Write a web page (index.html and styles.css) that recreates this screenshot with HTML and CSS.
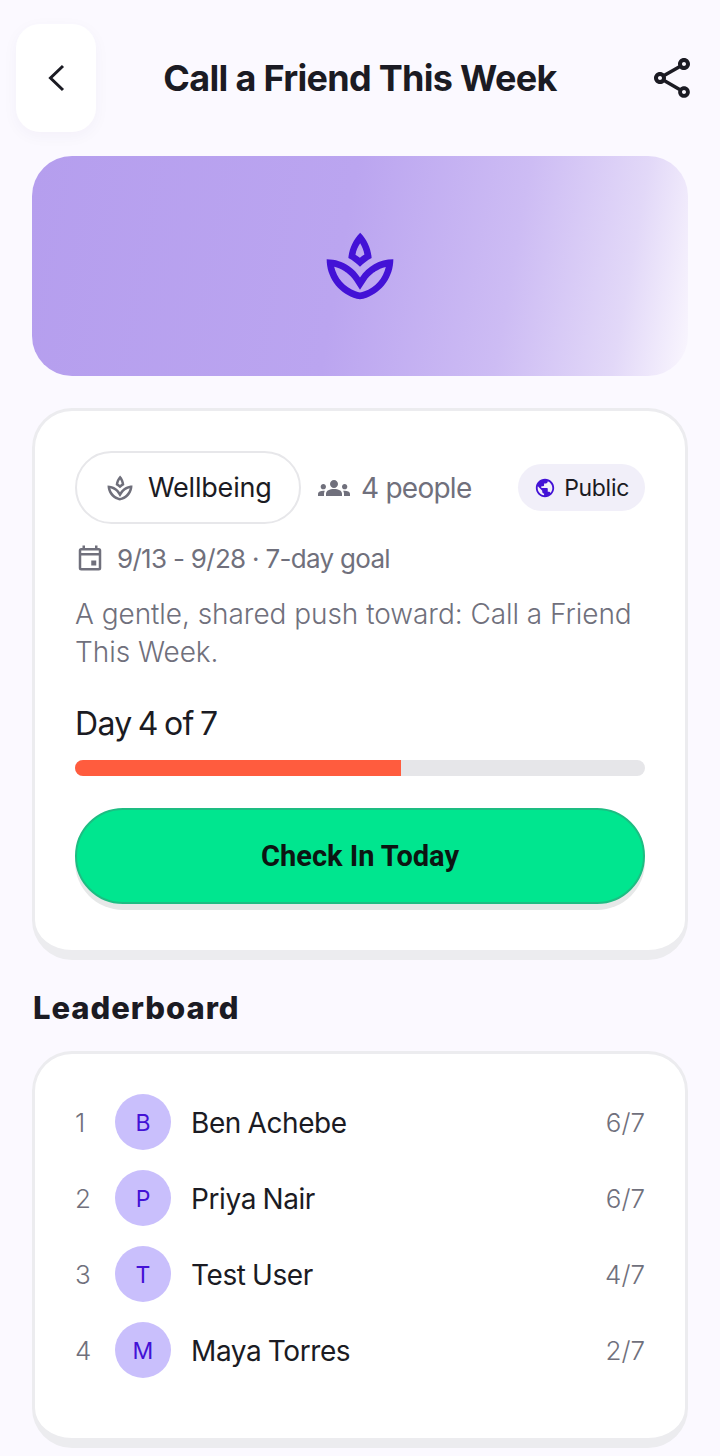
FILE: index.html
```html
<!DOCTYPE html>
<html lang="en">
<head>
    <meta charset="UTF-8">
    <meta name="viewport" content="width=device-width, initial-scale=1.0">
    <title>Call a Friend This Week</title>
    <link rel="stylesheet" href="styles.css">
</head>
<body>
    <header class="top-bar">
        <button class="back-button" aria-label="Back">
            <svg class="back-icon" viewBox="0 0 18 28"><path d="M16 2 3.5 14 16 26"/></svg>
        </button>
        <h1 class="page-title">Call a Friend This Week</h1>
        <svg class="share-icon" viewBox="0 0 24 24"><path d="M18 16.08c-.76 0-1.44.3-1.96.77L8.91 12.7c.05-.23.09-.46.09-.7s-.04-.47-.09-.7l7.05-4.11c.54.5 1.25.81 2.04.81 1.66 0 3-1.34 3-3s-1.34-3-3-3-3 1.34-3 3c0 .24.04.47.09.7L8.04 9.81C7.5 9.31 6.79 9 6 9c-1.66 0-3 1.34-3 3s1.34 3 3 3c.79 0 1.5-.31 2.04-.81l7.12 4.16c-.05.21-.08.43-.08.65 0 1.61 1.31 2.92 2.92 2.92s2.92-1.31 2.92-2.92-1.31-2.92-2.92-2.92zM18 4c.55 0 1 .45 1 1s-.45 1-1 1-1-.45-1-1 .45-1 1-1zM6 13c-.55 0-1-.45-1-1s.45-1 1-1 1 .45 1 1-.45 1-1 1zm12 7.02c-.55 0-1-.45-1-1s.45-1 1-1 1 .45 1 1-.45 1-1 1z"/></svg>
    </header>

    <main class="content">
        <div class="hero">
            <svg class="hero-icon" viewBox="0 0 24 24"><path d="M15.49 9.63c-.18-2.79-1.31-5.51-3.43-7.63-2.14 2.14-3.32 4.86-3.55 7.63 1.28.68 2.46 1.56 3.49 2.63 1.03-1.06 2.21-1.94 3.49-2.63zm-3.44-4.44c.63 1.03 1.07 2.18 1.27 3.39-.47.3-.92.63-1.35.98-.42-.34-.87-.67-1.33-.97.22-1.21.67-2.36 1.41-3.4zM12 15.45c-.82-1.25-1.86-2.34-3.06-3.2-.13-.09-.27-.16-.4-.26.13.09.27.17.39.25C6.98 10.83 4.59 10 2 10c0 5.32 3.36 9.82 8.03 11.49.63.23 1.29.4 1.97.51.68-.12 1.33-.29 1.97-.51C18.64 19.82 22 15.32 22 10c-4.18 0-7.85 2.18-10 5.45zm1.32 4.15c-.44.15-.88.27-1.33.37-.44-.09-.87-.21-1.29-.36-3.29-1.18-5.7-3.99-6.45-7.35 1.1.26 2.15.71 3.12 1.33l-.02.01c.13.09.26.18.39.25l.07.03c.99.72 1.84 1.61 2.51 2.65L12 19.1l1.67-2.55c.69-1.05 1.55-1.95 2.53-2.66l.07-.03c.09-.05.18-.11.27-.17l-.01-.02c.98-.65 2.07-1.13 3.21-1.4-.75 3.37-3.15 6.18-6.42 7.33z"/></svg>
        </div>

        <section class="card goal-card">
            <div class="meta-row">
                <div class="category-chip">
                    <svg class="chip-icon" viewBox="0 0 24 24"><path d="M15.49 9.63c-.18-2.79-1.31-5.51-3.43-7.63-2.14 2.14-3.32 4.86-3.55 7.63 1.28.68 2.46 1.56 3.49 2.63 1.03-1.06 2.21-1.94 3.49-2.63zm-3.44-4.44c.63 1.03 1.07 2.18 1.27 3.39-.47.3-.92.63-1.35.98-.42-.34-.87-.67-1.33-.97.22-1.21.67-2.36 1.41-3.4zM12 15.45c-.82-1.25-1.86-2.34-3.06-3.2-.13-.09-.27-.16-.4-.26.13.09.27.17.39.25C6.98 10.83 4.59 10 2 10c0 5.32 3.36 9.82 8.03 11.49.63.23 1.29.4 1.97.51.68-.12 1.33-.29 1.97-.51C18.64 19.82 22 15.32 22 10c-4.18 0-7.85 2.18-10 5.45zm1.32 4.15c-.44.15-.88.27-1.33.37-.44-.09-.87-.21-1.29-.36-3.29-1.18-5.7-3.99-6.45-7.35 1.1.26 2.15.71 3.12 1.33l-.02.01c.13.09.26.18.39.25l.07.03c.99.72 1.84 1.61 2.51 2.65L12 19.1l1.67-2.55c.69-1.05 1.55-1.95 2.53-2.66l.07-.03c.09-.05.18-.11.27-.17l-.01-.02c.98-.65 2.07-1.13 3.21-1.4-.75 3.37-3.15 6.18-6.42 7.33z"/></svg>
                    <span>Wellbeing</span>
                </div>
                <div class="people-count">
                    <svg class="people-icon" viewBox="0 0 24 24"><path d="M4 13c1.1 0 2-.9 2-2s-.9-2-2-2-2 .9-2 2 .9 2 2 2zm1.13 1.1c-.37-.06-.74-.1-1.13-.1-.99 0-1.93.21-2.78.58C.48 14.9 0 15.62 0 16.43V18h4.5v-1.61c0-.83.23-1.61.63-2.29zM20 13c1.1 0 2-.9 2-2s-.9-2-2-2-2 .9-2 2 .9 2 2 2zm4 3.43c0-.81-.48-1.53-1.22-1.85-.85-.37-1.79-.58-2.78-.58-.39 0-.76.04-1.13.1.4.68.63 1.46.63 2.29V18H24v-1.57zm-7.76-2.78c-1.17-.52-2.61-.9-4.24-.9-1.63 0-3.07.39-4.24.9C6.68 14.13 6 15.21 6 16.39V18h12v-1.61c0-1.18-.68-2.26-1.76-2.74zM12 12c1.66 0 3-1.34 3-3s-1.34-3-3-3-3 1.34-3 3 1.34 3 3 3z"/></svg>
                    <span>4 people</span>
                </div>
                <div class="visibility-pill">
                    <svg class="public-icon" viewBox="0 0 24 24"><path d="M12 2C6.48 2 2 6.48 2 12s4.48 10 10 10 10-4.48 10-10S17.52 2 12 2zm-1 17.93c-3.95-.49-7-3.85-7-7.93 0-.62.08-1.21.21-1.79L9 15v1c0 1.1.9 2 2 2v1.93zm6.9-2.54c-.26-.81-1-1.39-1.9-1.39h-1v-3c0-.55-.45-1-1-1H8v-2h2c.55 0 1-.45 1-1V7h2c1.1 0 2-.9 2-2v-.41c2.93 1.19 5 4.06 5 7.41 0 2.08-.8 3.97-2.1 5.39z"/></svg>
                    <span>Public</span>
                </div>
            </div>

            <div class="date-row">
                <svg class="date-icon" viewBox="0 0 24 24"><path fill-rule="evenodd" d="M6 2h2v2h8V2h2v2h1a2 2 0 0 1 2 2v14a2 2 0 0 1-2 2H5a2 2 0 0 1-2-2V6a2 2 0 0 1 2-2h1V2zM5 6v2h14V6H5zm0 4v10h14V10H5zm8 4h4v4h-4v-4z"/></svg>
                <span>9/13 - 9/28 · 7-day goal</span>
            </div>

            <p class="description">A gentle, shared push toward: Call a Friend This Week.</p>

            <div class="day-label">Day 4 of 7</div>
            <div class="progress-track">
                <div class="progress-fill" style="width: 57.14%"></div>
            </div>

            <button class="check-in-button">Check In Today</button>
        </section>

        <h2 class="section-heading">Leaderboard</h2>

        <section class="card leaderboard-card">
            <ul class="leaderboard-list">
                <li class="leaderboard-row">
                    <span class="rank">1</span>
                    <span class="avatar">B</span>
                    <span class="name">Ben Achebe</span>
                    <span class="score">6/7</span>
                </li>
                <li class="leaderboard-row">
                    <span class="rank">2</span>
                    <span class="avatar">P</span>
                    <span class="name">Priya Nair</span>
                    <span class="score">6/7</span>
                </li>
                <li class="leaderboard-row">
                    <span class="rank">3</span>
                    <span class="avatar">T</span>
                    <span class="name">Test User</span>
                    <span class="score">4/7</span>
                </li>
                <li class="leaderboard-row">
                    <span class="rank">4</span>
                    <span class="avatar">M</span>
                    <span class="name">Maya Torres</span>
                    <span class="score">2/7</span>
                </li>
            </ul>
        </section>
    </main>
</body>
</html>
```

FILE: styles.css
```css
* {
    box-sizing: border-box;
}

body {
    margin: 0;
    height: 1456px;
    overflow: hidden;
    background: #FBF9FF;
    font-family: Inter, "Noto Sans", sans-serif;
    color: #1B1B23;
}

.top-bar {
    display: grid;
    grid-template-columns: 1fr auto 1fr;
    align-items: center;
    padding: 24px 16px 0;
}

.back-button {
    justify-self: start;
    display: flex;
    align-items: center;
    justify-content: center;
    width: 80px;
    height: 108px;
    padding: 0;
    background: #ffffff;
    border: none;
    border-radius: 24px;
    box-shadow: 0 4px 16px rgba(40, 20, 90, 0.04);
}

.back-icon {
    width: 18px;
    height: 28px;
    fill: none;
    stroke: #1B1B23;
    stroke-width: 3;
}

.page-title {
    margin: 0;
    font-size: 36px;
    font-weight: 700;
    letter-spacing: -0.7px;
    white-space: nowrap;
}

.share-icon {
    justify-self: end;
    width: 48px;
    height: 48px;
    margin-right: 8px;
    fill: #1B1B23;
}

.content {
    padding: 24px 32px 0;
}

.hero {
    display: flex;
    align-items: center;
    justify-content: center;
    height: 220px;
    border-radius: 40px;
    background: linear-gradient(100deg, #B59EEE 0%, #BBA5F0 47%, #CDBCF4 72%, #E2D8F8 89%, #FAF7FE 100%);
}

.hero-icon {
    width: 80px;
    height: 80px;
    fill: #4312D6;
}

.card {
    background: #ffffff;
    border: 3px solid #ECECEF;
    border-bottom-width: 10px;
    border-radius: 40px;
}

.goal-card {
    margin-top: 32px;
    height: 552px;
    padding: 40px 40px 0;
}

.meta-row {
    display: flex;
    align-items: center;
}

.category-chip {
    display: flex;
    align-items: center;
    gap: 13px;
    width: 226px;
    height: 73px;
    padding-left: 28px;
    border: 2px solid #E7E7EA;
    border-radius: 37px;
    font-size: 27px;
    letter-spacing: -0.2px;
}

.chip-icon {
    width: 30px;
    height: 30px;
    fill: #6F6F7B;
}

.people-count {
    display: flex;
    align-items: center;
    gap: 11px;
    margin-left: 17px;
    font-size: 28px;
    letter-spacing: -0.75px;
    color: #70707C;
}

.people-icon {
    width: 32px;
    height: 32px;
    fill: #70707C;
}

.visibility-pill {
    display: flex;
    align-items: center;
    gap: 8px;
    height: 47px;
    margin-left: auto;
    padding: 0 16px 0 16px;
    background: #F1EFF9;
    border-radius: 24px;
    font-size: 23px;
    letter-spacing: -0.3px;
}

.public-icon {
    width: 22px;
    height: 22px;
    fill: #4312D6;
}

.date-row {
    display: flex;
    align-items: center;
    gap: 12px;
    margin-top: 16px;
    height: 36px;
    font-size: 26px;
    letter-spacing: -0.7px;
    color: #70707C;
}

.date-icon {
    width: 30px;
    height: 30px;
    fill: #70707C;
}

.description {
    margin: 19px 0 0;
    font-size: 28px;
    line-height: 38px;
    font-weight: 300;
    letter-spacing: -0.05px;
    color: #70707C;
}

.day-label {
    margin-top: 33px;
    font-size: 32px;
    line-height: 40px;
    letter-spacing: -0.7px;
    word-spacing: -2px;
}

.progress-track {
    height: 16px;
    margin-top: 16px;
    background: #E6E6E9;
    border-radius: 8px;
    overflow: hidden;
}

.progress-fill {
    height: 100%;
    background: #FF5C3E;
}

.check-in-button {
    display: block;
    width: 100%;
    height: 96px;
    margin-top: 32px;
    background: #00E68F;
    border: 2px solid #1DBD82;
    border-radius: 48px;
    box-shadow: 0 6px 0 #E6E8E8;
    font-family: Roboto, sans-serif;
    font-size: 29px;
    font-weight: 700;
    color: #0C1512;
}

.section-heading {
    margin: 28px 0 0 1px;
    font-size: 31px;
    line-height: 40px;
    font-weight: 800;
    letter-spacing: 0.95px;
}

.leaderboard-card {
    margin-top: 23px;
    height: 397px;
    padding: 40px 40px 0;
}

.leaderboard-list {
    display: flex;
    flex-direction: column;
    gap: 20px;
    margin: 0;
    padding: 0;
    list-style: none;
}

.leaderboard-row {
    display: flex;
    align-items: center;
    font-size: 28px;
}

.rank {
    width: 40px;
    color: #70707C;
    font-size: 26px;
    font-weight: 300;
}

.avatar {
    display: flex;
    align-items: center;
    justify-content: center;
    width: 56px;
    height: 56px;
    padding-top: 2px;
    background: #C9BFFC;
    border-radius: 50%;
    font-size: 23px;
    font-weight: 400;
    color: #4312D6;
}

.name {
    flex: 1;
    margin-left: 20px;
    padding-top: 2px;
    letter-spacing: -0.4px;
    word-spacing: -1px;
}

.score {
    font-size: 26px;
    font-weight: 300;
    color: #70707C;
}
```
